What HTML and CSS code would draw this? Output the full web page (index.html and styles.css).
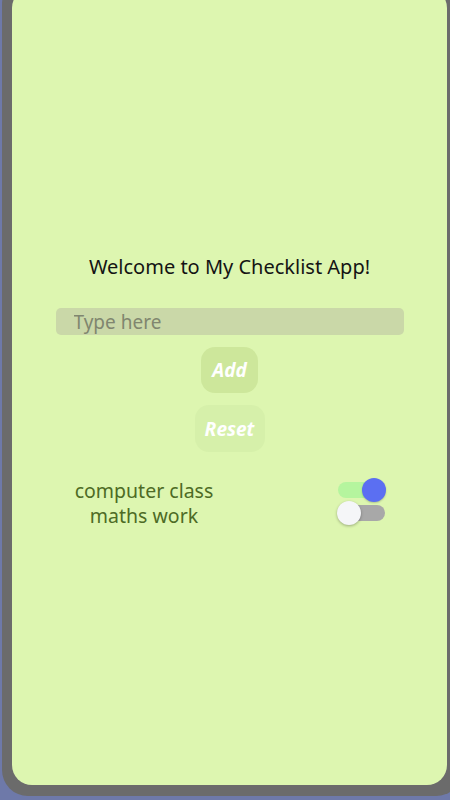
FILE: index.html
```html
<!DOCTYPE html>
<html lang="en">
<head>
<meta charset="utf-8">
<title>My Checklist App</title>
<link rel="stylesheet" href="styles.css">
</head>
<body>
<div class="frame">
  <main class="card">
    <h1 class="title">Welcome to My Checklist App!</h1>
    <input class="task-input" type="text" placeholder="Type here">
    <button class="btn btn-add">Add</button>
    <button class="btn btn-reset">Reset</button>
    <section class="list">
      <div class="labels">
        <div class="item">computer class</div>
        <div class="item">maths work</div>
      </div>
      <div class="switches">
        <div class="switch on"><span class="thumb"></span></div>
        <div class="switch off"><span class="thumb"></span></div>
      </div>
    </section>
  </main>
</div>
</body>
</html>
```
FILE: styles.css
```css
html, body {
  margin: 0;
  padding: 0;
  height: 800px;
  overflow: hidden;
  background: #6e79a9;
}
.frame {
  box-sizing: border-box;
  width: 460px;
  margin: -22px 0 0 2px;
  padding: 10px 0 11px 10px;
  background: #6b6b6b;
  border-radius: 26px;
}
.card {
  box-sizing: border-box;
  width: 435px;
  height: 797px;
  background: #ddf6b0;
  border-radius: 20px;
  padding-top: 266px;
  display: flex;
  flex-direction: column;
  align-items: center;
  font-family: "Noto Sans", "Open Sans", sans-serif;
}
.title {
  margin: 0;
  font-size: 20px;
  line-height: 26px;
  font-weight: 400;
  color: #141414;
}
.task-input {
  box-sizing: border-box;
  margin-top: 28px;
  width: 348px;
  height: 27px;
  border: none;
  border-radius: 5px;
  background: #cad8a8;
  padding: 0 0 0 18px;
  font-family: inherit;
  font-size: 19px;
  color: #333;
  outline: none;
}
.task-input::placeholder {
  color: #80866f;
}
.btn {
  border: none;
  margin-top: 12px;
  height: 46px;
  border-radius: 14px;
  font-family: inherit;
  font-size: 19px;
  font-weight: 700;
  font-style: italic;
  color: #ffffff;
  padding: 0;
}
.btn-add {
  width: 57px;
  background: #cde79b;
}
.btn-reset {
  width: 70px;
  height: 47px;
  background: #d6f0aa;
}
.list {
  align-self: stretch;
  margin-top: 26px;
  display: flex;
  justify-content: space-between;
  padding: 0 62px 0 48px;
}
.labels {
  width: 168px;
  text-align: center;
  color: #4d6b25;
  font-size: 19.5px;
  line-height: 25px;
}
.switches {
  display: flex;
  flex-direction: column;
}
.switch {
  position: relative;
  width: 47px;
  height: 16px;
  border-radius: 8px;
  margin: 4px 0;
}
.switch + .switch {
  margin-top: 3px;
}
.switch.on { background: #b5f59e; }
.switch.off { background: #a8a8a8; }
.thumb {
  position: absolute;
  top: -4px;
  width: 24px;
  height: 24px;
  border-radius: 50%;
}
.switch.on .thumb {
  right: -1px;
  background: #5b6ff2;
  box-shadow: 0 1px 2px rgba(0,0,0,0.2);
}
.switch.off .thumb {
  left: -1px;
  background: #f5f6f8;
  box-shadow: 0 1px 3px rgba(0,0,0,0.3);
}
```
